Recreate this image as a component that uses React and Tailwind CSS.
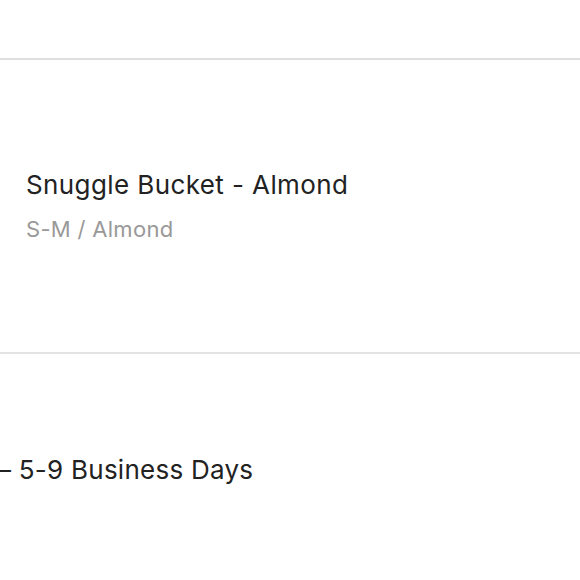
export default function App() {
  return (
    <div className="w-[580px] h-[580px] overflow-hidden bg-white" style={{ fontFamily: "Inter, 'Noto Sans', sans-serif" }}>
      <div className="h-[58px]" />
      <div className="h-[2px] bg-[#dedede]" />
      <div className="h-[292px] flex flex-col justify-center pl-[26px]">
        <div className="text-[26px] leading-[32px] tracking-[0.4px] text-[#222]">Snuggle Bucket - Almond</div>
        <div className="mt-[14px] text-[22px] leading-[28px] tracking-[0.3px] text-[#999]">S-M / Almond</div>
      </div>
      <div className="h-[2px] bg-[#e3e3e3]" />
      <div className="pt-[100px] -ml-[2px] text-[26px] leading-[32px] tracking-[0.25px] text-[#222] whitespace-nowrap">– 5-9 Business Days</div>
    </div>
  );
}
